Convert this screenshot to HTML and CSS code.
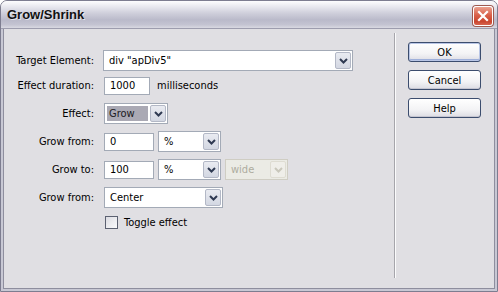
FILE: index.html
```html
<!DOCTYPE html>
<html lang="en">

<head>
  <meta charset="UTF-8">
  <title>Grow/Shrink</title>
  <link rel="stylesheet" href="styles.css">
</head>

<body>
  <div class="window">
    <div class="titlebar">
      <span class="title">Grow/Shrink</span>
      <span class="close">
        <svg width="18" height="18" viewBox="0 0 18 18">
          <path d="M5 5 L13 13 M13 5 L5 13" stroke="#fff" stroke-width="2.2" stroke-linecap="square" fill="none" />
        </svg>
      </span>
    </div>
    <div class="client">
      <div class="form">
        <div class="row row-first">
          <span class="label">Target Element:</span>
          <div class="combo combo-target">
            <span class="combo-value">div "apDiv5"</span>
            <span class="combo-btn"><svg width="9" height="6" viewBox="0 0 9 6"><path d="M1 1 L4.5 4.5 L8 1" /></svg></span>
          </div>
        </div>
        <div class="row">
          <span class="label">Effect duration:</span>
          <span class="field field-duration">1000</span>
          <span class="unit">milliseconds</span>
        </div>
        <div class="row">
          <span class="label">Effect:</span>
          <div class="combo combo-effect">
            <span class="combo-value"><span class="selected">Grow</span></span>
            <span class="combo-btn"><svg width="9" height="6" viewBox="0 0 9 6"><path d="M1 1 L4.5 4.5 L8 1" /></svg></span>
          </div>
        </div>
        <div class="row">
          <span class="label">Grow from:</span>
          <span class="field field-num">0</span>
          <div class="combo combo-unit">
            <span class="combo-value">%</span>
            <span class="combo-btn"><svg width="9" height="6" viewBox="0 0 9 6"><path d="M1 1 L4.5 4.5 L8 1" /></svg></span>
          </div>
        </div>
        <div class="row">
          <span class="label">Grow to:</span>
          <span class="field field-num">100</span>
          <div class="combo combo-unit">
            <span class="combo-value">%</span>
            <span class="combo-btn"><svg width="9" height="6" viewBox="0 0 9 6"><path d="M1 1 L4.5 4.5 L8 1" /></svg></span>
          </div>
          <div class="combo combo-unit combo-disabled">
            <span class="combo-value">wide</span>
            <span class="combo-btn"><svg width="9" height="6" viewBox="0 0 9 6"><path d="M1 1 L4.5 4.5 L8 1" /></svg></span>
          </div>
        </div>
        <div class="row">
          <span class="label">Grow from:</span>
          <div class="combo combo-origin">
            <span class="combo-value">Center</span>
            <span class="combo-btn"><svg width="9" height="6" viewBox="0 0 9 6"><path d="M1 1 L4.5 4.5 L8 1" /></svg></span>
          </div>
        </div>
        <div class="row row-check">
          <span class="label"></span>
          <span class="checkbox"></span>
          <span class="check-text">Toggle effect</span>
        </div>
      </div>
      <div class="actions">
        <button class="btn btn-default">OK</button>
        <button class="btn">Cancel</button>
        <button class="btn">Help</button>
      </div>
    </div>
  </div>
</body>

</html>
```

FILE: styles.css
```css
* {
  box-sizing: border-box;
}

body {
  margin: 0;
  background: #fff;
  font-family: "DejaVu Sans Condensed", "Liberation Sans", sans-serif;
  font-size: 11px;
  color: #000;
}

.window {
  width: 498px;
  height: 292px;
  display: flex;
  flex-direction: column;
  border: 1px solid #7d7d90;
  border-radius: 7px 7px 0 0;
  overflow: hidden;
  background: #e0dfe3;
}

/* title bar */

.titlebar {
  flex: none;
  height: 28px;
  display: flex;
  align-items: center;
  justify-content: space-between;
  padding: 0 4px 0 6px;
  background: linear-gradient(#fdfdfe 0%, #ebebf1 18%, #cfcfdb 45%, #babaca 70%, #c4c4d2 88%, #d9d9e2 100%);
  border-bottom: 1px solid #9d9dae;
}

.title {
  font-family: "Liberation Sans", sans-serif;
  font-weight: bold;
  font-size: 13px;
  color: #111;
  text-shadow: 1px 1px 0 rgba(255, 255, 255, .6);
}

.close {
  width: 20px;
  height: 20px;
  display: flex;
  align-items: center;
  justify-content: center;
  margin-top: 3px;
  border: 1px solid #fff;
  border-radius: 3px;
  background: linear-gradient(#eaa18f, #d9614a 45%, #c9452f 80%, #d7644f);
  box-shadow: 0 0 0 1px #9e5a50;
}

/* client area */

.client {
  flex: 1;
  display: flex;
  border: solid #c8c8d4;
  border-width: 0 2px 2px;
  box-shadow: inset 1px 0 #8e8e9e, inset -1px 0 #8e8e9e, inset 0 -1px #8e8e9e;
}

.form {
  width: 391px;
  margin: 4px 0 11px 1px;
  padding-top: 17px;
  display: flex;
  flex-direction: column;
  gap: 7px;
  border-right: 1px solid #a6a5ab;
  box-shadow: 1px 0 0 #fbfbfc;
}

.row {
  display: flex;
  align-items: center;
  height: 21px;
}

.row-first {
  margin-bottom: -3px;
}

.row-check {
  height: 15px;
}

.label {
  width: 90px;
  margin-right: 10px;
  text-align: right;
  white-space: nowrap;
}

/* text fields */

.field {
  height: 18px;
  line-height: 16px;
  padding: 0 5px;
  background: #fff;
  border: 1px solid #a3aab6;
}

.field-duration {
  width: 46px;
}

.field-num {
  width: 50px;
}

.unit {
  margin-left: 7px;
}

/* combo boxes */

.combo {
  height: 21px;
  display: flex;
  align-items: stretch;
  background: #fff;
  border: 1px solid #a3aab6;
}

.combo-value {
  flex: 1;
  display: flex;
  align-items: center;
  padding-left: 5px;
  white-space: nowrap;
  overflow: hidden;
}

.combo-btn {
  width: 16px;
  margin: 1px;
  display: flex;
  align-items: center;
  justify-content: center;
  border: 1px solid #b3b8c6;
  border-radius: 2px;
  background: linear-gradient(#e9ebf1, #d3d7e2);
}

.combo-btn path {
  fill: none;
  stroke: #2f3a52;
  stroke-width: 2;
}

.combo-target {
  width: 250px;
  margin-left: -1px;
}

.combo-effect {
  width: 64px;
}

.combo-effect .combo-value {
  padding: 2px 1px 2px 2px;
}

.selected {
  flex: 1;
  align-self: stretch;
  display: flex;
  align-items: center;
  padding-left: 2px;
  background: #aaa9b4;
  color: #1b1b22;
}

.combo-unit {
  width: 63px;
  margin-left: 4px;
}

.combo-origin {
  width: 119px;
}

.combo-disabled {
  background: #ebebe5;
  border-color: #cfcdc3;
  color: #aeac9f;
}

.combo-disabled .combo-btn {
  background: #efeee9;
  border-color: #dedcd2;
}

.combo-disabled .combo-btn path {
  stroke: #c9c7bb;
}

/* checkbox */

.checkbox {
  width: 13px;
  height: 13px;
  margin-left: 1px;
  border: 1px solid #5c6171;
  background: linear-gradient(135deg, #dcdce2, #fbfbfc);
}

.check-text {
  margin-left: 6px;
}

/* buttons */

.actions {
  display: flex;
  flex-direction: column;
  gap: 8px;
  margin-top: 13px;
  padding-left: 13px;
}

.btn {
  width: 73px;
  height: 20px;
  padding: 0;
  font: inherit;
  color: #000;
  border: 1px solid #3c4d6e;
  border-radius: 3px;
  background: linear-gradient(#ffffff, #f3f3f5 60%, #dcdce3);
  box-shadow: inset 0 -1px 0 #c5c5d0;
}

.btn-default {
  box-shadow: inset 0 0 0 1px #b9c6e6, inset 0 -2px 0 #9fb0da;
}
```
